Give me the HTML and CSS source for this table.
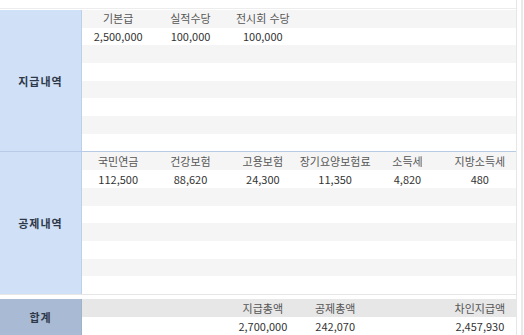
FILE: index.html
```html
<!DOCTYPE html>
<html lang="ko">
<head>
<meta charset="utf-8">
<link rel="stylesheet" href="styles.css">
</head>
<body>
<div class="page">
  <div class="main">
    <div class="topbar"></div>
    <section class="sec pay">
      <div class="label">지급내역</div>
      <div class="grid">
        <div class="row head"><span>기본급</span><span>실적수당</span><span>전시회 수당</span><span></span><span></span><span></span></div>
        <div class="row"><span>2,500,000</span><span>100,000</span><span>100,000</span><span></span><span></span><span></span></div>
        <div class="row alt"></div>
        <div class="row"></div>
        <div class="row alt"></div>
        <div class="row"></div>
        <div class="row alt"></div>
        <div class="row"></div>
      </div>
    </section>
    <section class="sec ded">
      <div class="label">공제내역</div>
      <div class="grid">
        <div class="row head"><span>국민연금</span><span>건강보험</span><span>고용보험</span><span>장기요양보험료</span><span>소득세</span><span>지방소득세</span></div>
        <div class="row"><span>112,500</span><span>88,620</span><span>24,300</span><span>11,350</span><span>4,820</span><span>480</span></div>
        <div class="row alt"></div>
        <div class="row"></div>
        <div class="row alt"></div>
        <div class="row"></div>
        <div class="row alt"></div>
        <div class="row"></div>
      </div>
    </section>
    <section class="sec total">
      <div class="label">합계</div>
      <div class="grid">
        <div class="row head"><span></span><span></span><span>지급총액</span><span>공제총액</span><span></span><span>차인지급액</span></div>
        <div class="row"><span></span><span></span><span>2,700,000</span><span>242,070</span><span></span><span>2,457,930</span></div>
      </div>
    </section>
  </div>
  <div class="track"></div>
</div>
</body>
</html>
```
FILE: styles.css
```css
html, body {
  margin: 0;
  padding: 0;
  background: #ffffff;
}
body {
  font-family: "Noto Sans CJK KR", "Noto Sans", sans-serif;
  font-size: 11px;
  color: #333333;
  height: 335px;
  overflow: hidden;
}
.page {
  display: flex;
  height: 335px;
}
.main {
  width: 516px;
  border-right: 1px solid #e6e6e6;
  display: flex;
  flex-direction: column;
}
.track {
  margin-left: 4px;
  width: 2px;
  background: #e9e9e9;
}
.topbar {
  height: 8px;
  border-bottom: 1px solid #ececec;
  margin-bottom: 1px;
}
.sec {
  display: flex;
}
.label {
  width: 81px;
  border-right: 1px solid #bdd0ea;
  background: #cfe0f7;
  display: flex;
  align-items: center;
  justify-content: center;
  font-weight: bold;
  color: #2e3848;
  letter-spacing: 1px;
}
.grid {
  flex: 1;
  display: flex;
  flex-direction: column;
}
.pay, .ded {
  height: 142px;
}
.pay {
  border-bottom: 1px solid #b7cbe6;
}
.ded {
  border-bottom: 1px solid #e6e6e6;
}
.pay .grid, .ded .grid {
  display: grid;
  grid-template-rows: repeat(8, 1fr);
}
.row {
  display: grid;
  grid-template-columns: repeat(6, 1fr);
  align-items: center;
  text-align: center;
  background: #ffffff;
  line-height: 1;
}
.row.alt {
  background: #f5f5f5;
}
.row.head {
  background: #f5f5f5;
  color: #555555;
}
.total {
  margin-top: 4px;
  flex: 1;
}
.total .label {
  background: #a9bbd4;
  border-right-color: #9fb2cc;
}
.total .grid {
  display: grid;
  grid-template-rows: 18px 18px;
}
.total .row.head {
  background: #e7e7e7;
}
```
